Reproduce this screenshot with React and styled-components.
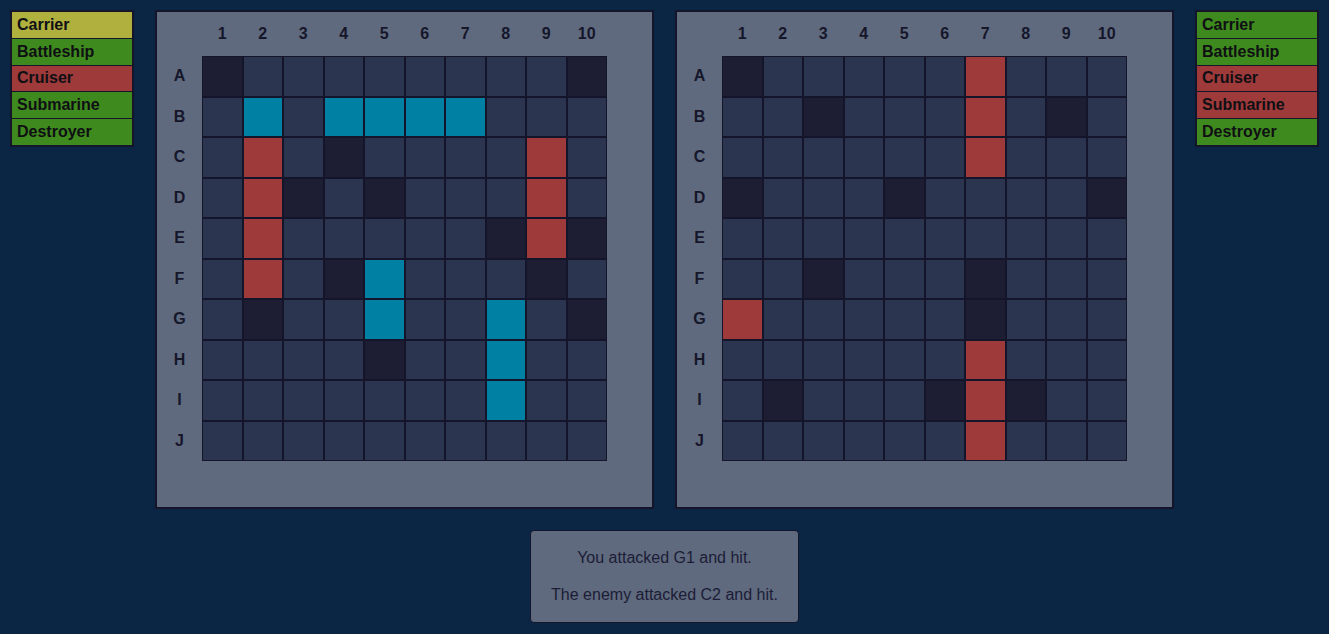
import React from "react";
import styled, { createGlobalStyle } from "styled-components";

const GlobalStyle = createGlobalStyle`
  body {
    margin: 0;
    background-color: #0b2545;
    font-family: "Liberation Sans", Arial, sans-serif;
  }
`;

const COLORS = {
  empty: "#2c3550",
  miss: "#1d1d33",
  ship: "#0080a3",
  hit: "#9e3a3a",
};

const SHIP_COLORS = {
  damaged: "#b0b03f",
  afloat: "#3e8a1e",
  sunk: "#9e3a3a",
};

const ROWS = ["A", "B", "C", "D", "E", "F", "G", "H", "I", "J"];
const COLS = [1, 2, 3, 4, 5, 6, 7, 8, 9, 10];

// marcações por célula: "s" navio, "x" acerto, "o" água
const playerMarks = {
  A1: "o", A10: "o",
  B2: "s", B4: "s", B5: "s", B6: "s", B7: "s",
  C2: "x", C4: "o", C9: "x",
  D2: "x", D3: "o", D5: "o", D9: "x",
  E2: "x", E8: "o", E9: "x", E10: "o",
  F2: "x", F4: "o", F5: "s", F9: "o",
  G2: "o", G5: "s", G8: "s", G10: "o",
  H5: "o", H8: "s",
  I8: "s",
};

const enemyMarks = {
  A1: "o", A7: "x",
  B3: "o", B7: "x", B9: "o",
  C7: "x",
  D1: "o", D5: "o", D10: "o",
  F3: "o", F7: "o",
  G1: "x", G7: "o",
  H7: "x",
  I2: "o", I6: "o", I7: "x", I8: "o",
  J7: "x",
};

const MARK_TO_STATE = { s: "ship", x: "hit", o: "miss" };

const leftShips = [
  { name: "Carrier", status: "damaged" },
  { name: "Battleship", status: "afloat" },
  { name: "Cruiser", status: "sunk" },
  { name: "Submarine", status: "afloat" },
  { name: "Destroyer", status: "afloat" },
];

const rightShips = [
  { name: "Carrier", status: "afloat" },
  { name: "Battleship", status: "afloat" },
  { name: "Cruiser", status: "sunk" },
  { name: "Submarine", status: "sunk" },
  { name: "Destroyer", status: "afloat" },
];

const Page = styled.div`
  display: flex;
  flex-direction: column;
  align-items: center;
  padding: 10px 0;
`;

const TopRow = styled.div`
  display: flex;
  align-items: flex-start;
  gap: 21px;
`;

const ShipList = styled.div`
  width: 124px;
  box-sizing: border-box;
  border: 2px solid #14142a;
  display: flex;
  flex-direction: column;
`;

const ShipRow = styled.div`
  height: 25.75px;
  display: flex;
  align-items: center;
  padding-left: 5px;
  background-color: ${({ $status }) => SHIP_COLORS[$status]};
  color: #0f0f14;
  font-size: 16px;
  font-weight: bold;

  & + & {
    border-top: 1px solid #14142a;
  }
`;

const Board = styled.div`
  width: 499px;
  box-sizing: border-box;
  border: 2px solid #14142a;
  background-color: #5f6a7e;
  display: grid;
  grid-template-columns: 45px 405px;
  grid-template-rows: 44px 405px;
  padding: 0 45px 46px 0;
`;

const ColLabels = styled.div`
  display: grid;
  grid-template-columns: repeat(10, 1fr);
  align-items: center;
  justify-items: center;
`;

const RowLabels = styled.div`
  display: grid;
  grid-template-rows: repeat(10, 1fr);
  align-items: center;
  justify-items: center;
`;

const Label = styled.span`
  color: #16162b;
  font-size: 16px;
  font-weight: bold;
`;

const Grid = styled.div`
  display: grid;
  grid-template-columns: repeat(10, 1fr);
  grid-template-rows: repeat(10, 1fr);
  width: 405px;
  height: 405px;
`;

const Cell = styled.div`
  box-sizing: border-box;
  border: 1px solid #14142a;
  background-color: ${({ $state }) => COLORS[$state]};
`;

const MessageBox = styled.div`
  margin-top: 21px;
  padding: 0 20px;
  border: 1px solid #14142a;
  border-radius: 4px;
  background-color: #5f6a7e;
  text-align: center;
`;

const Message = styled.p`
  margin: 18px 0;
  line-height: 18.5px;
  font-size: 16px;
  color: #1c1c36;
`;

const ShipPanel = ({ ships }) => (
  <ShipList>
    {ships.map((ship) => (
      <ShipRow key={ship.name} $status={ship.status}>
        {ship.name}
      </ShipRow>
    ))}
  </ShipList>
);

const GameBoard = ({ marks }) => (
  <Board>
    <div />
    <ColLabels>
      {COLS.map((c) => (
        <Label key={c}>{c}</Label>
      ))}
    </ColLabels>
    <RowLabels>
      {ROWS.map((r) => (
        <Label key={r}>{r}</Label>
      ))}
    </RowLabels>
    <Grid>
      {ROWS.map((r) =>
        COLS.map((c) => {
          const mark = marks[`${r}${c}`];
          return <Cell key={`${r}${c}`} $state={mark ? MARK_TO_STATE[mark] : "empty"} />;
        })
      )}
    </Grid>
  </Board>
);

const App = () => {
  return (
    <>
      <GlobalStyle />
      <Page>
        <TopRow>
          <ShipPanel ships={leftShips} />
          <GameBoard marks={playerMarks} />
          <GameBoard marks={enemyMarks} />
          <ShipPanel ships={rightShips} />
        </TopRow>
        <MessageBox>
          <Message>You attacked G1 and hit.</Message>
          <Message>The enemy attacked C2 and hit.</Message>
        </MessageBox>
      </Page>
    </>
  );
};

export default App;
